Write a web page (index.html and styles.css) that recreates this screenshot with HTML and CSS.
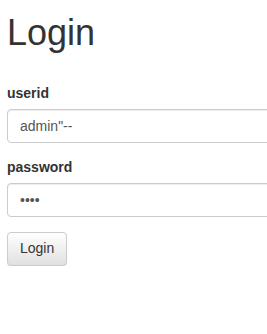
FILE: index.html
```html
<!DOCTYPE html>
<html lang="en">
<head>
    <meta charset="UTF-8">
    <meta name="viewport" content="width=device-width, initial-scale=1.0">
    <title>Login</title>
    <link rel="stylesheet" href="styles.css">
</head>
<body>
    <div class="container">
        <h1>Login</h1>
        <form>
            <div class="form-group">
                <label for="userid">userid</label>
                <input type="text" id="userid" class="form-control" value="admin&quot;--">
            </div>
            <div class="form-group">
                <label for="password">password</label>
                <input type="password" id="password" class="form-control" value="pass">
            </div>
            <button type="submit" class="btn">Login</button>
        </form>
    </div>
</body>
</html>
```
FILE: styles.css
```css
html, body {
    overflow: hidden;
}
body {
    margin: 0;
    font-family: "Liberation Sans", Arial, Helvetica, sans-serif;
    font-size: 14px;
    line-height: 1.42857;
    color: #333;
    background: #fff;
}
.container {
    width: 300px;
    padding: 0 7px;
}
h1 {
    font-size: 36px;
    font-weight: 500;
    line-height: 1.1;
    margin: 13px 0 31px;
}
.form-group {
    margin-bottom: 15px;
}
label {
    display: inline-block;
    margin-bottom: 5px;
    font-weight: bold;
}
.form-control {
    display: block;
    box-sizing: border-box;
    width: 100%;
    height: 34px;
    padding: 6px 12px;
    font-family: inherit;
    font-size: 14px;
    line-height: 1.42857;
    color: #555;
    background: #fff;
    border: 1px solid #ccc;
    border-radius: 4px;
    box-shadow: inset 0 1px 1px rgba(0, 0, 0, .075);
}
.btn {
    display: inline-block;
    height: 34px;
    padding: 6px 12px;
    font-family: inherit;
    font-size: 14px;
    line-height: 1.42857;
    color: #333;
    background-image: linear-gradient(to bottom, #fff 0, #e0e0e0 100%);
    border: 1px solid #ccc;
    border-radius: 4px;
    box-shadow: inset 0 1px 0 rgba(255, 255, 255, .15), 0 1px 1px rgba(0, 0, 0, .075);
    cursor: pointer;
}
```
